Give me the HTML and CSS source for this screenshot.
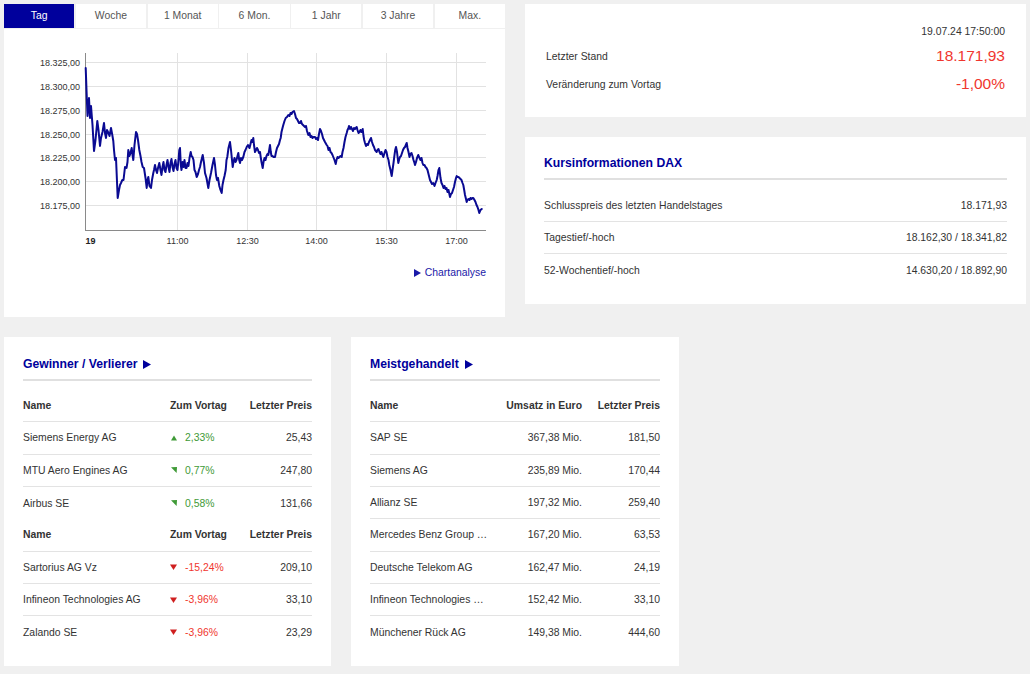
FILE: index.html
```html
<!DOCTYPE html>
<html lang="de">
<head>
<meta charset="utf-8">
<title>DAX</title>
<link rel="stylesheet" href="styles.css">
</head>
<body>
<div class="page">
  <div class="top">
    <section class="chart-col">
      <nav class="tabs">
        <div class="tab active">Tag</div>
        <div class="tab">Woche</div>
        <div class="tab">1 Monat</div>
        <div class="tab">6 Mon.</div>
        <div class="tab">1 Jahr</div>
        <div class="tab">3 Jahre</div>
        <div class="tab">Max.</div>
      </nav>
      <div class="chart-panel">
        <svg class="chart" viewBox="4 29 501 222" width="501" height="222">
          <g class="grid">
            <line x1="85.5" y1="62.5" x2="486" y2="62.5"/>
            <line x1="85.5" y1="86.5" x2="486" y2="86.5"/>
            <line x1="85.5" y1="110.5" x2="486" y2="110.5"/>
            <line x1="85.5" y1="134.5" x2="486" y2="134.5"/>
            <line x1="85.5" y1="157.5" x2="486" y2="157.5"/>
            <line x1="85.5" y1="181.5" x2="486" y2="181.5"/>
            <line x1="85.5" y1="205.5" x2="486" y2="205.5"/>
            <line x1="177.5" y1="53" x2="177.5" y2="230"/>
            <line x1="247.5" y1="53" x2="247.5" y2="230"/>
            <line x1="316.5" y1="53" x2="316.5" y2="230"/>
            <line x1="386.5" y1="53" x2="386.5" y2="230"/>
            <line x1="456.5" y1="53" x2="456.5" y2="230"/>
          </g>
          <g class="axis">
            <line x1="85.5" y1="53" x2="85.5" y2="230.5"/>
            <line x1="85" y1="230.5" x2="486" y2="230.5"/>
          </g>
          <g class="ylabels">
            <text x="80" y="65.8">18.325,00</text>
            <text x="80" y="89.8">18.300,00</text>
            <text x="80" y="113.8">18.275,00</text>
            <text x="80" y="137.8">18.250,00</text>
            <text x="80" y="160.8">18.225,00</text>
            <text x="80" y="184.8">18.200,00</text>
            <text x="80" y="208.8">18.175,00</text>
          </g>
          <g class="xlabels">
            <text x="90.5" y="243.5" class="day">19</text>
            <text x="177.5" y="243.5">11:00</text>
            <text x="247.5" y="243.5">12:30</text>
            <text x="316.5" y="243.5">14:00</text>
            <text x="386.5" y="243.5">15:30</text>
            <text x="456.5" y="243.5">17:00</text>
          </g>
          <polyline class="line" points="85.7,68 86.5,90 87.5,116 88.5,104 89,98 90,118 91,106 92.5,125 94,151 95.5,140 97.3,121 98.5,130 100,146 101,138 102.5,132 104,123 105,133 106,138 107,130 108,132 109.5,136 111,128 112.3,135 113.3,141 114,150 115,160 116,158 117.7,198 119,190 120,185 121,183 122.3,180 123.5,180 125,167 126.5,168 127.5,162 128.3,150 129.5,156 130.5,153 131.7,148 132.5,155 133.3,160 134.5,145 136,132 137,134 138,140 139.3,150 140.5,156 141.5,162 142.7,167 144,168 145.5,178 146.7,188 147.5,180 148.3,177 149.5,186 151,188 152,180 153.3,173 154,170 155,165 156,170 157,173 158,168 159.3,163 160.5,170 161.5,175 162.5,167 163.5,162 164.5,170 165.5,172 166.5,165 167.5,160 168.5,167 169.5,172 170.5,163 171.5,159 172.5,167 173.5,171 174.5,164 175.5,160 176.5,168 177.5,170 178.5,160 179.3,150 180,148 180.8,165 181.5,170 182.5,162 183.5,167 184.5,160 185.5,168 186.5,168 187.5,163 188.5,166 189.5,158 190.7,152 191.5,156 192.5,157 193.5,160 194.5,170 195.5,172 196.7,177 198,174 199,170 200,167 201,162 202.7,155 204,163 205,173 206.5,178 208.3,188 209.5,180 211,173 212.5,165 214,158 215,165 216,175 217,180 218,178 219.3,186 220.5,190 221.7,193 222.5,185 223.5,180 224.5,176 225.7,170 226.5,160 227.3,157 228.5,148 230,142 231,150 232,160 232.7,167 233.5,162 234.5,158 235.5,162 236.5,160 237.5,156 238.3,153 239.2,160 240,163 241,158 242,160 243.3,157 244.5,152 245.5,150 246.7,147 248,145 249.5,148 250.5,144 251.5,140 252.5,142 253.3,138 254,145 255,152 256,150 257,148 258,150 259,153 260,152 260.7,157 261.5,162 262.7,168 263.5,162 264.5,158 265.5,160 266.5,156 267.5,154 268.3,155 269.2,150 270,145 270.8,152 271.5,156 272.5,156 273.5,157 275,157 276,152 277,148 278,146 279,144 280,140 280.7,138 281.5,132 282.5,128 283.3,125 284.5,121 285.7,118 287,117 288.3,115 289.5,116 290.5,113 291.5,114 292.5,112 294,111 295,114 296,118 297,119 298,121 299,123 300,123 301,121 302,124 303,125 305,127 306,126 307,131 308.3,135 309.5,133 310.5,137 311.5,136 312.5,138 313.5,137 315,137 316,139 317,138 318,140 319,134 320,129 321,131 322,134 323,138 324,140 325,142 326.7,145 327.5,146 328.5,150 329.5,148 330.5,152 331.5,153 332.5,155 333.3,157 334.5,160 335.7,164 336.5,160 337.5,157 338.5,158 339.5,157 340.5,156 341.7,157 342.5,152 343.5,148 344.5,142 345.5,137 346.7,133 347.5,130 348.5,128 349,126 350,129 351,127 352,129 353,131 354,128 355,129 356.7,127 357.5,130 358.5,133 359.5,132 360.5,130 361.5,132 362.7,129 363.5,136 364.2,140 365,143 366,146 367,144 368,145 369,142 370,140 371,138 372,142 373,145 374,147 375,150 376.7,152 377.5,150 378.5,149 379.5,152 380.5,154 381.5,152 382.5,155 383.3,157 384.5,153 385.5,150 386.5,152 387.5,157 388.5,160 389.3,165 390.5,170 391.7,176 392.5,170 393.5,163 394.5,155 395.2,150 396,147 397,152 398.3,163 399,160 400,157 401,156 402,153 403,150 404,148 405,147 406.7,143 407.5,148 408.5,152 409.5,157 410.5,154 411.5,153 412.5,156 413.5,160 414.5,163 415,165 416,162 417,158 418.3,155 419.5,158 420.5,160 421.5,158 422.5,163 423.3,165 424.5,165 425.5,167 426.5,168 427.5,170 428.5,174 430,180 431,182 432,184 433.3,183 434.5,186 435.5,183 436.7,180 437.5,176 438.5,170 439.3,168 440.5,178 441.5,183 442.5,185 443.5,188 444.5,186 445.5,189 446.5,188 447.5,192 448.5,190 450,197 451,194 452,193 453,190 454,187 455,182 456,178 456.7,176 457.5,177 458.5,177 459.5,178 460.5,179 461.5,180 462.5,183 463.3,185 464.2,190 465,195 466,199 466.7,202 467.5,200 468.5,199 469.5,200 470.5,198 471.5,199 472.5,198 473.3,198 474.5,200 475.5,202 476.5,205 477.5,207 478.5,210 479.3,213 480.5,210 481.7,209"/>
        </svg>
        <a class="chart-link" href="#">
          <svg class="tri" width="7" height="8" viewBox="0 0 7 8"><polygon points="0,0 7,4 0,8"/></svg>
          <span>Chartanalyse</span>
        </a>
      </div>
    </section>

    <div class="right-col">
      <section class="panel quote">
        <div class="quote-date">19.07.24 17:50:00</div>
        <div class="quote-row first">
          <span>Letzter Stand</span>
          <span class="big neg">18.171,93</span>
        </div>
        <div class="quote-row">
          <span>Veränderung zum Vortag</span>
          <span class="big neg">-1,00%</span>
        </div>
      </section>

      <section class="panel info">
        <h2 class="panel-title">Kursinformationen DAX</h2>
        <div class="info-rows">
          <div class="info-row"><span>Schlusspreis des letzten Handelstages</span><span>18.171,93</span></div>
          <div class="info-row"><span>Tagestief/-hoch</span><span>18.162,30 / 18.341,82</span></div>
          <div class="info-row last"><span>52-Wochentief/-hoch</span><span>14.630,20 / 18.892,90</span></div>
        </div>
      </section>
    </div>
  </div>

  <div class="bottom">
    <section class="panel list gv">
      <h2 class="panel-title">Gewinner / Verlierer <svg class="tri-title" width="8" height="9" viewBox="0 0 8 9"><polygon points="0,0 8,4.5 0,9"/></svg></h2>
      <div class="table">
        <div class="row head"><span>Name</span><span>Zum Vortag</span><span class="r">Letzter Preis</span></div>
        <div class="row"><span>Siemens Energy AG</span><span class="chg pos"><svg class="ind" width="6" height="6" viewBox="0 0 6 6"><polygon points="0,5.5 3,0.5 6,5.5"/></svg>2,33%</span><span class="r">25,43</span></div>
        <div class="row"><span>MTU Aero Engines AG</span><span class="chg pos"><svg class="ind" width="6" height="6" viewBox="0 0 6 6"><polygon points="0,0.3 6,0 5.6,6"/></svg>0,77%</span><span class="r">247,80</span></div>
        <div class="row last"><span>Airbus SE</span><span class="chg pos"><svg class="ind" width="6" height="6" viewBox="0 0 6 6"><polygon points="0,0.3 6,0 5.6,6"/></svg>0,58%</span><span class="r">131,66</span></div>
        <div class="row head"><span>Name</span><span>Zum Vortag</span><span class="r">Letzter Preis</span></div>
        <div class="row"><span>Sartorius AG Vz</span><span class="chg neg"><svg class="ind down" width="7" height="6" viewBox="0 0 7 6"><polygon points="0,0.5 7,0.5 3.5,6"/></svg>-15,24%</span><span class="r">209,10</span></div>
        <div class="row"><span>Infineon Technologies AG</span><span class="chg neg"><svg class="ind down" width="7" height="6" viewBox="0 0 7 6"><polygon points="0,0.5 7,0.5 3.5,6"/></svg>-3,96%</span><span class="r">33,10</span></div>
        <div class="row last"><span>Zalando SE</span><span class="chg neg"><svg class="ind down" width="7" height="6" viewBox="0 0 7 6"><polygon points="0,0.5 7,0.5 3.5,6"/></svg>-3,96%</span><span class="r">23,29</span></div>
      </div>
    </section>

    <section class="panel list mg">
      <h2 class="panel-title">Meistgehandelt <svg class="tri-title" width="8" height="9" viewBox="0 0 8 9"><polygon points="0,0 8,4.5 0,9"/></svg></h2>
      <div class="table">
        <div class="row head"><span>Name</span><span class="r">Umsatz in Euro</span><span class="r">Letzter Preis</span></div>
        <div class="row"><span>SAP SE</span><span class="r">367,38 Mio.</span><span class="r">181,50</span></div>
        <div class="row"><span>Siemens AG</span><span class="r">235,89 Mio.</span><span class="r">170,44</span></div>
        <div class="row"><span>Allianz SE</span><span class="r">197,32 Mio.</span><span class="r">259,40</span></div>
        <div class="row"><span>Mercedes Benz Group …</span><span class="r">167,20 Mio.</span><span class="r">63,53</span></div>
        <div class="row"><span>Deutsche Telekom AG</span><span class="r">162,47 Mio.</span><span class="r">24,19</span></div>
        <div class="row"><span>Infineon Technologies …</span><span class="r">152,42 Mio.</span><span class="r">33,10</span></div>
        <div class="row last"><span>Münchener Rück AG</span><span class="r">149,38 Mio.</span><span class="r">444,60</span></div>
      </div>
    </section>
  </div>
</div>
</body>
</html>
```

FILE: styles.css
```css
* { box-sizing: border-box; }

html, body {
  margin: 0;
  background: #f0f0f0;
}

body {
  font-family: "Liberation Sans", Arial, sans-serif;
  font-size: 10.4px;
  color: #333;
}

.page {
  width: 1030px;
  padding: 4px;
}

.top {
  display: flex;
  gap: 20px;
}

/* Chart column */
.chart-col {
  width: 501px;
  display: flex;
  flex-direction: column;
  gap: 1px;
}

.tabs {
  display: flex;
  gap: 1.5px;
  height: 24px;
}

.tab {
  flex: 1;
  background: #fff;
  color: #555;
  text-align: center;
  line-height: 24px;
}

.tab.active {
  background: #00009c;
  color: #fff;
}

.chart-panel {
  background: #fff;
  height: 288px;
}

.chart {
  display: block;
}

.grid line {
  stroke: #e2e2e2;
  stroke-width: 1;
}

.axis line {
  stroke: #8a8a8a;
  stroke-width: 1;
}

.ylabels text,
.xlabels text {
  font-family: "Liberation Sans", Arial, sans-serif;
  font-size: 9px;
  fill: #333;
}

.ylabels text { text-anchor: end; }
.xlabels text { text-anchor: middle; }
.xlabels .day { font-weight: bold; fill: #222; }

.line {
  fill: none;
  stroke: #0a0a92;
  stroke-width: 2;
  stroke-linejoin: round;
  stroke-linecap: round;
}

.chart-link {
  display: flex;
  justify-content: flex-end;
  align-items: center;
  gap: 4px;
  margin-top: 14px;
  padding-right: 19px;
  line-height: 16px;
  color: #1a1aa8;
  text-decoration: none;
}

.tri polygon { fill: #1a1aa8; }

/* Right column */
.right-col {
  width: 501px;
  display: flex;
  flex-direction: column;
  gap: 20px;
}

.panel {
  background: #fff;
}

.quote {
  height: 113px;
  padding: 20px 21px 0;
}

.quote-date {
  text-align: right;
  line-height: 16px;
}

.quote-row {
  display: flex;
  justify-content: space-between;
  align-items: center;
  height: 28px;
}

.quote-row.first { margin-top: 2px; }

.big {
  font-size: 15.5px;
}

.neg { color: #f0362e; }
.pos { color: #3f9a37; }

.panel-title {
  margin: 0;
  font-size: 12.2px;
  font-weight: bold;
  color: #00009c;
  line-height: 16px;
  padding-bottom: 7px;
  border-bottom: 2px solid #e0e0e0;
  display: flex;
  align-items: center;
  gap: 6px;
}

.tri-title polygon { fill: #00009c; }

.info {
  height: 167px;
  padding: 18px 19px 0;
}

.info-rows {
  margin-top: 10px;
}

.info-row {
  display: flex;
  justify-content: space-between;
  align-items: center;
  height: 32px;
  border-bottom: 1px solid #e3e3e3;
}

.info-row.last { border-bottom: none; }

/* Bottom lists */
.bottom {
  display: flex;
  gap: 20px;
  margin-top: 20px;
}

.list {
  height: 329px;
  padding: 19px 19px 0;
}

.gv { width: 327px; }
.mg { width: 328px; }

.table {
  margin-top: 9px;
}

.row {
  display: grid;
  align-items: center;
  height: 32.33px;
  border-bottom: 1px solid #e3e3e3;
  white-space: nowrap;
}

.gv .row { grid-template-columns: 147px minmax(0, 1fr) auto; }
.mg .row { grid-template-columns: minmax(0, 1fr) 90px 78px; }

.row.last { border-bottom: none; }

.row.head {
  font-weight: bold;
  color: #333;
}

.r { text-align: right; }

.chg {
  display: flex;
  align-items: center;
}

.ind {
  margin-left: 1px;
  margin-right: 8px;
  flex: none;
}

.pos .ind polygon { fill: #3f9a37; }
.neg .ind polygon { fill: #cf1f1f; }
.ind.down { margin-left: 0; margin-right: 8px; }
```
